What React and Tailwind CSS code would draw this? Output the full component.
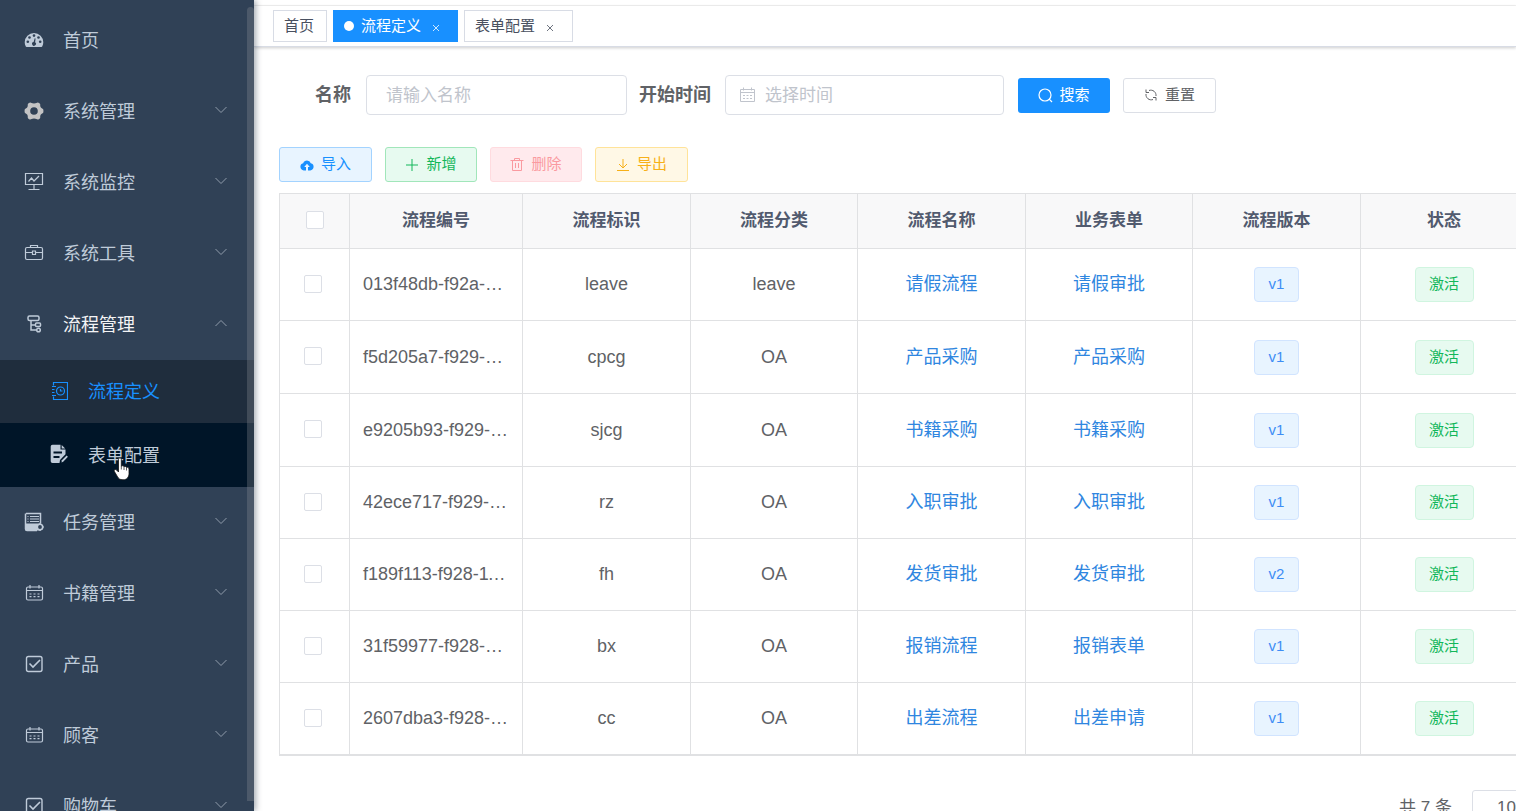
import { useState } from "react";

const menuItems = [
    { label: "首页", icon: DashboardIcon },
    { label: "系统管理", icon: GearIcon, children: [] },
    { label: "系统监控", icon: MonitorIcon, children: [] },
    { label: "系统工具", icon: ToolboxIcon, children: [] },
    {
        label: "流程管理",
        icon: TreeIcon,
        open: true,
        children: [
            { label: "流程定义", icon: NotebookIcon, style: "h-[63px] bg-[#1f2d3d] text-[#1890ff]" },
            { label: "表单配置", icon: FormIcon, style: "h-[64px] bg-[#001528] text-[#bfcbd9]" },
        ],
    },
    { label: "任务管理", icon: TaskIcon, children: [] },
    { label: "书籍管理", icon: DateIcon, children: [] },
    { label: "产品", icon: CheckIcon, children: [] },
    { label: "顾客", icon: DateIcon, children: [] },
    { label: "购物车", icon: CheckIcon, children: [] },
];

const columns = ["流程编号", "流程标识", "流程分类", "流程名称", "业务表单", "流程版本", "状态"];

const rows = [
    { id: "013f48db-f92a-11eb-9d6c", key: "leave", category: "leave", name: "请假流程", form: "请假审批", version: "v1" },
    { id: "f5d205a7-f929-11eb-9d6c", key: "cpcg", category: "OA", name: "产品采购", form: "产品采购", version: "v1" },
    { id: "e9205b93-f929-11eb-9d6c", key: "sjcg", category: "OA", name: "书籍采购", form: "书籍采购", version: "v1" },
    { id: "42ece717-f929-11eb-9d6c", key: "rz", category: "OA", name: "入职审批", form: "入职审批", version: "v1" },
    { id: "f189f113-f928-11eb-9d6c", key: "fh", category: "OA", name: "发货审批", form: "发货审批", version: "v2" },
    { id: "31f59977-f928-11eb-9d6c", key: "bx", category: "OA", name: "报销流程", form: "报销表单", version: "v1" },
    { id: "2607dba3-f928-11eb-9d6c", key: "cc", category: "OA", name: "出差流程", form: "出差申请", version: "v1" },
];

function Svg({ children }) {
    return (
        <svg width="20" height="20" viewBox="0 0 20 20" fill="none" stroke="currentColor" strokeWidth="1.2" className="mb-[2px] shrink-0" aria-hidden="true">
            {children}
        </svg>
    );
}

function DashboardIcon() {
    return (
        <Svg>
            <path d="M10 3a9.3 9.3 0 0 0-9.3 9.3c0 1.6.4 3.1 1.1 4.3.2.3.4.4.7.4h15c.3 0 .5-.1.7-.4.7-1.2 1.1-2.7 1.1-4.3A9.3 9.3 0 0 0 10 3z" fill="currentColor" stroke="none" />
            <g fill="#304156" stroke="none">
                <circle cx="3.8" cy="11.8" r="1.3" />
                <circle cx="5.5" cy="7.5" r="1.3" />
                <circle cx="10" cy="5.6" r="1.3" />
                <circle cx="14.5" cy="7.5" r="1.3" />
                <circle cx="16.2" cy="11.8" r="1.3" />
                <path d="M10.7 8.2l.9.2-.5 3.900a1.900 1.900 0 1 1-1.500-.3z" />
            </g>
        </Svg>
    );
}

function GearIcon() {
    return (
        <Svg>
            <path
                d="M6.300 1.500c1 0 1.300 1 3.700 1s2.700-1 3.700-1c.8 0 2.300.9 2.500 1.800.2 1-.3 1.700.5 3s2.400 1.500 2.600 2.300c.2.900.2 1.900 0 2.800-.2.800-1.800 1-2.600 2.300s-.3 2-.5 3c-.2.900-1.700 1.800-2.500 1.800-1 0-1.300-1-3.700-1s-2.700 1-3.700 1c-.8 0-2.300-.9-2.500-1.800-.2-1 .3-1.700-.5-3S.9 12.200.7 11.400c-.2-.9-.2-1.900 0-2.800.2-.8 1.800-1 2.600-2.300s.3-2 .5-3c.2-.9 1.700-1.800 2.500-1.800zM10 6.200a3.800 3.800 0 1 0 0 7.600 3.800 3.800 0 0 0 0-7.600z"
                fill="#c3c3c4"
                fillRule="evenodd"
                stroke="none"
            />
        </Svg>
    );
}

function MonitorIcon() {
    return (
        <Svg>
            <path d="M1.500 1.500h17v11h-17zM10 12.500v5M4.500 17.500h11M4.500 9.500l3-3.500 2.500 3 5-5" />
        </Svg>
    );
}

function ToolboxIcon() {
    return (
        <Svg>
            <rect x="1.500" y="4.500" width="17" height="12" rx="1.500" />
            <path d="M6.500 4.500v-2h7v2M1.500 9.500h7M11.500 9.500h7M8.500 8h3v3.500h-3z" />
        </Svg>
    );
}

function TreeIcon() {
    return (
        <Svg>
            <rect x="4" y="2" width="11" height="4.500" rx="1.500" strokeWidth="1.500" />
            <path d="M7 6.500v9.500h5M7 11h5" strokeWidth="1.500" />
            <rect x="11.500" y="9" width="5" height="3.500" rx="1" strokeWidth="1.500" />
            <circle cx="14.500" cy="16" r="1.800" strokeWidth="1.500" />
        </Svg>
    );
}

function NotebookIcon() {
    return (
        <Svg>
            <path d="M5.500 4.500v-3h14v17h-14v-3M4 5.500h4M4 8.500h2.500M4 11.500h2.500M4 14.500h4" />
            <circle cx="12.500" cy="10" r="4" />
            <path d="M12.500 8v2h2" />
        </Svg>
    );
}

function FormIcon() {
    return (
        <Svg>
            <path d="M4.500.8h8v4.700h5v4.800l-5.500 5.800-.5 3h-7a1.800 1.800 0 0 1-1.800-1.800V2.600A1.800 1.800 0 0 1 4.500.8z" fill="currentColor" stroke="none" />
            <path d="M13.700 1l3.500 3.500h-3.500z" fill="currentColor" stroke="none" />
            <path d="M5.500 8.500H14M5.500 13h6" stroke="#001528" strokeWidth="1.800" />
            <path d="M13.500 18.500l.4-2.200 4.700-4.900 1.300 1.400-4.700 4.900z" fill="currentColor" stroke="none" />
        </Svg>
    );
}

function TaskIcon() {
    return (
        <Svg>
            <path d="M2 1.500h14.500v10M1.500 1.500V17c0 1 .6 1.500 1.500 1.500h10" strokeWidth="1.500" />
            <path d="M1.500 11.500H17v7H3c-1 0-1.500-.5-1.500-1.500z" fill="currentColor" stroke="none" />
            <path d="M3.500 4.500h1M6 4.500h9M3.500 7h1M6 7h9M3.500 9.500h1M6 9.500h9" />
            <circle cx="16" cy="15" r="2.700" fill="#304156" strokeWidth="1.600" />
            <path d="M16 11v1.500M16 17.500V19M12 15h1.500M18.500 15H20" />
        </Svg>
    );
}

function DateIcon() {
    return (
        <Svg>
            <rect x="2.500" y="4" width="16" height="13" rx="1.500" />
            <path d="M2.500 7.500h16M6 2v3.500M15 2v3.500" />
            <path d="M5.500 11h2M9.500 11h2M13.500 11h2M5.500 13.700h2M9.500 13.700h2M13.500 13.700h2" />
        </Svg>
    );
}

function CheckIcon() {
    return (
        <Svg>
            <rect x="2.500" y="2.500" width="15.500" height="15" rx="2" strokeWidth="1.400" />
            <path d="M5.500 9.500l3.500 3.500 7-7" strokeWidth="1.600" />
        </Svg>
    );
}

function Chevron({ up }) {
    return (
        <svg width="14" height="8" viewBox="0 0 14 8" fill="none" stroke="#909cab" className={`mr-[26px] mb-1 ml-auto ${up ? "rotate-180" : ""}`} aria-hidden="true">
            <path d="M1.500 1l5.500 5.500L12.500 1" />
        </svg>
    );
}

function Sidebar() {
    return (
        <aside className="relative z-10 w-[254px] shrink-0 overflow-hidden bg-[#304156] text-[18px] text-[#bfcbd9] shadow-[2px_0_6px_rgba(0,21,41,0.35)]">
            <nav className="pt-[5px]">
                {menuItems.map((item) => {
                    const Icon = item.icon;
                    return (
                        <div key={item.label}>
                            <a href="#" className={`flex h-[71px] items-center gap-[19px] pl-6 ${item.open ? "text-[#f4f4f5]" : ""}`}>
                                <span className="text-[#bfcbd9]"><Icon /></span>
                                <span className="pt-[2px]">{item.label}</span>
                                {item.children && <Chevron up={item.open} />}
                            </a>
                            {item.open && item.children.map((child) => {
                                const ChildIcon = child.icon;
                                return (
                                    <a key={child.label} href="#" className={`flex items-center gap-5 pl-12 ${child.style}`}>
                                        <ChildIcon />
                                        <span className="pt-[2px]">{child.label}</span>
                                    </a>
                                );
                            })}
                        </div>
                    );
                })}
            </nav>
            <div className="absolute top-[7px] right-0 bottom-[10px] w-[7px] rounded-t bg-[#909399]/30"></div>
            <svg width="18" height="24" viewBox="0 0 18 24" className="absolute top-[457px] left-[113px]" aria-hidden="true">
                <path
                    d="M5.500 2.200C5.500.4 8.300.4 8.300 2.200v7c.6-.8 2.500-.6 2.700.6.700-.7 2.300-.4 2.500.8.900-.6 2.500-.1 2.500 1.400v4.500c0 3.500-2 6.300-6 6.300-3.200 0-4.600-1.300-5.800-3.600L1.400 14.500c-.8-1.600 1-2.700 2.200-1.500l1.900 2z"
                    fill="#fff"
                    stroke="#111"
                    strokeWidth=".8"
                />
                <path d="M8.300 9v3.500M11 10v3M13.500 11v2.500" stroke="#333" strokeWidth=".8" />
            </svg>
        </aside>
    );
}

function TagsBar() {
    return (
        <div className="border-t border-[#f2f2f2]">
            <div className="flex h-[41px] items-center gap-[6px] border-b border-[#d8dce5] pl-[19px] text-[15px] text-[#495060] shadow-[0_1px_3px_rgba(0,0,0,0.2)]">
                <a href="#" className="flex h-8 w-[54px] items-center border border-[#d8dce5] pl-[10px]">首页</a>
                <a href="#" className="flex h-8 w-[125px] items-center bg-[#1890ff] pl-[11px] text-white">
                    <span className="mr-[7px] size-[10px] rounded-full bg-white"></span>
                    流程定义
                    <TagClose />
                </a>
                <a href="#" className="flex h-8 w-[109px] items-center border border-[#d8dce5] pl-[10px]">
                    表单配置
                    <TagClose />
                </a>
            </div>
        </div>
    );
}

function TagClose() {
    return (
        <svg width="8" height="8" viewBox="0 0 8 8" stroke="currentColor" strokeWidth=".8" className="mt-[3px] ml-[11px]" aria-hidden="true">
            <path d="M1 1l6 6M7 1L1 7" />
        </svg>
    );
}

function SearchForm() {
    const [name, setName] = useState("");
    const [startTime, setStartTime] = useState("");

    return (
        <form className="flex items-center pl-9 text-[#606266]" onSubmit={(e) => e.preventDefault()}>
            <label htmlFor="name" className="mr-[15px] text-[18px] font-bold">名称</label>
            <input
                className="mr-[12px] h-10 w-[261px] rounded border border-[#dcdfe6] px-[19px] pt-[2px] text-[17px] placeholder:text-[#c0c4cc]"
                type="text"
                id="name"
                placeholder="请输入名称"
                value={name}
                onChange={(e) => setName(e.target.value)}
            />
            <label htmlFor="startTime" className="mr-[14px] text-[18px] font-bold">开始时间</label>
            <div className="mr-[14px] flex h-10 w-[279px] items-center gap-[9px] rounded border border-[#dcdfe6] pl-[13px]">
                <svg width="17" height="16" viewBox="0 0 17 16" fill="none" stroke="#c0c4cc" className="shrink-0" aria-hidden="true">
                    <path d="M1.500 2.500h14v12h-14zM1.500 5.500h14M4.500.5v3M12.500.5v3M4 8.500h2M7.500 8.500h2M11 8.500h2M4 11.500h2M7.500 11.500h2M11 11.500h2" />
                </svg>
                <input
                    className="w-full min-w-0 pt-[2px] text-[17px] outline-none placeholder:text-[#c0c4cc]"
                    type="text"
                    id="startTime"
                    placeholder="选择时间"
                    value={startTime}
                    onChange={(e) => setStartTime(e.target.value)}
                />
            </div>
            <button type="submit" className="mr-[13px] flex h-[35px] w-[92px] items-center justify-center gap-[6px] rounded-[3px] bg-[#1890ff] text-[15px] text-white">
                <svg width="15" height="15" viewBox="0 0 15 15" fill="none" stroke="currentColor" strokeWidth="1.2" aria-hidden="true">
                    <circle cx="7" cy="7" r="6" />
                    <path d="M11.200 11.200L14 14" />
                </svg>
                搜索
            </button>
            <button type="reset" className="flex h-[35px] w-[93px] items-center justify-center gap-[7px] rounded-[3px] border border-[#dcdfe6] text-[15px]">
                <svg width="14" height="14" viewBox="0 0 14 14" fill="none" stroke="currentColor" aria-hidden="true">
                    <path d="M2 4.500h3M2 4.500V1.500M2.200 4.500M5 2.500A5.200 5.200 0 0 1 12 8M12 9.500H9M12 9.500v3M9 11.500A5.200 5.200 0 0 1 2 6" />
                </svg>
                重置
            </button>
        </form>
    );
}

function ActionButton({ className, children }) {
    return (
        <button type="button" className={`flex h-[35px] items-center justify-center gap-[7px] rounded-[3px] border text-[15px] ${className}`}>
            {children}
        </button>
    );
}

function Toolbar() {
    return (
        <div className="mt-8 flex gap-[13px]">
            <ActionButton className="w-[93px] border-[#a3d3ff] bg-[#e8f4ff] text-[#1890ff]">
                <svg width="14" height="12" viewBox="0 0 14 12" fill="currentColor" aria-hidden="true">
                    <path d="M3.200 4.300a4 4 0 0 1 7.600 0A3.600 3.600 0 0 1 10.200 11.400H8V8h1.800L7 4.800 4.200 8H6v3.400H3.800a3.600 3.600 0 0 1-.6-7.100z" />
                </svg>
                导入
            </ActionButton>
            <ActionButton className="w-[92px] border-[#a1e6ba] bg-[#e7faf0] text-[#13b75a]">
                <svg width="14" height="14" viewBox="0 0 14 14" stroke="currentColor" aria-hidden="true">
                    <path d="M7 1v12M1 7h12" />
                </svg>
                新增
            </ActionButton>
            <ActionButton className="w-[92px] border-[#ffdbdf] bg-[#ffeaed] text-[#fa9aa0]">
                <svg width="14" height="15" viewBox="0 0 14 15" fill="none" stroke="currentColor" aria-hidden="true">
                    <path d="M.5 3.500h13M2.500 3.500v10h9v-10M4.500 3.500v-2h5v2M5.500 6v5M8.500 6v5" />
                </svg>
                删除
            </ActionButton>
            <ActionButton className="w-[93px] border-[#ffe399] bg-[#fff8e6] text-[#f7b018]">
                <svg width="14" height="14" viewBox="0 0 14 14" fill="none" stroke="currentColor" aria-hidden="true">
                    <path d="M7 1v9M3 6l4 4 4-4M1 12.500h12" />
                </svg>
                导出
            </ActionButton>
        </div>
    );
}

const checkboxStyle = "mb-[2px] block size-[18px] appearance-none rounded-[2px] border border-[#dcdfe6] bg-white";

function ProcessTable() {
    return (
        <table className="mt-[11px] w-[1249px] table-fixed border-separate border-spacing-0 border-t border-b border-l border-[#e0e1e3] text-[#606266]">
            <colgroup>
                <col className="w-[70px]" />
                <col className="w-[173px]" />
                <col className="w-[168px]" />
                <col className="w-[167px]" />
                <col className="w-[168px]" />
                <col className="w-[167px]" />
                <col className="w-[168px]" />
                <col />
            </colgroup>
            <thead>
                <tr className="h-[55px] bg-[#f8f8f9] text-[17px] text-[#515a6e] *:border-r *:border-b *:border-[#e0e1e3]">
                    <th className="pl-[26px]">
                        <input type="checkbox" aria-label="全选" className={checkboxStyle} />
                    </th>
                    {columns.map((column) => (
                        <th key={column} className="font-bold">{column}</th>
                    ))}
                </tr>
            </thead>
            <tbody>
                {rows.map((row) => (
                    <tr key={row.id} className="h-[72px] text-center text-[18px] nth-2:h-[73px] nth-3:h-[73px] *:border-r *:border-b *:border-[#e0e1e3]">
                        <td className="pl-6">
                            <input type="checkbox" aria-label={row.name} className={checkboxStyle} />
                        </td>
                        <td className="truncate px-[13px] text-left">{row.id}</td>
                        <td>{row.key}</td>
                        <td>{row.category}</td>
                        <td><a href="#" className="text-[#2f86e0]">{row.name}</a></td>
                        <td><a href="#" className="text-[#2f86e0]">{row.form}</a></td>
                        <td>
                            <span className="mx-auto flex h-[35px] w-[45px] items-center justify-center rounded border border-[#d1e4ff] bg-[#e8f4ff] text-[15px] text-[#3d8df5]">{row.version}</span>
                        </td>
                        <td>
                            <span className="mx-auto flex h-[35px] w-[59px] items-center justify-center rounded border border-[#d0f5e0] bg-[#e7faf0] text-[15px] text-[#13b75a]">激活</span>
                        </td>
                    </tr>
                ))}
            </tbody>
        </table>
    );
}

function Pagination() {
    return (
        <div className="mt-[34px] flex w-[1321px] items-center justify-end gap-5 text-[17px] text-[#606266]">
            <span>共 7 条</span>
            <select aria-label="每页条数" className="h-9 w-32 appearance-none rounded-[3px] border border-[#dcdfe6] pl-6">
                <option>10条/页</option>
            </select>
        </div>
    );
}

export default function App() {
    return (
        <div className="flex h-screen overflow-hidden bg-white font-['Liberation_Sans','Noto_Sans_CJK_SC',sans-serif]">
            <Sidebar />
            <main className="min-w-0 flex-1 overflow-hidden pt-[5px]">
                <TagsBar />
                <div className="pt-7 pl-[25px]">
                    <SearchForm />
                    <Toolbar />
                    <ProcessTable />
                    <Pagination />
                </div>
            </main>
        </div>
    );
}
